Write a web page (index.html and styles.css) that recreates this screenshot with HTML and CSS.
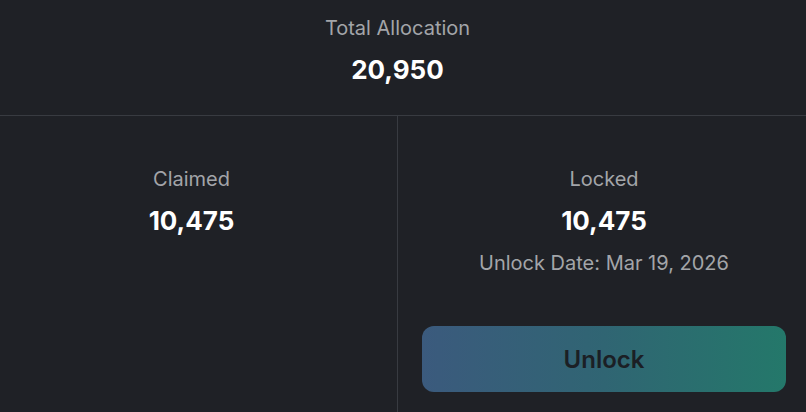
FILE: index.html
```html
<!DOCTYPE html>
<html lang="en">
<head>
<meta charset="utf-8">
<title>Allocation</title>
<link rel="stylesheet" href="styles.css">
</head>
<body>
<main class="panel">
  <section class="total">
    <div class="label">Total Allocation</div>
    <div class="value">20,950</div>
  </section>
  <section class="split">
    <div class="cell cell-claimed">
      <div class="label">Claimed</div>
      <div class="value">10,475</div>
    </div>
    <div class="cell cell-locked">
      <div class="label">Locked</div>
      <div class="value">10,475</div>
      <div class="date">Unlock Date: Mar 19, 2026</div>
      <button class="unlock" type="button">Unlock</button>
    </div>
  </section>
</main>
</body>
</html>
```
FILE: styles.css
```css
html, body {
  margin: 0;
  padding: 0;
  background: #1f2126;
}
body {
  font-family: Inter, "Noto Sans", sans-serif;
  color: #ffffff;
  width: 806px;
  height: 412px;
  overflow: hidden;
}
.panel {
  display: flex;
  flex-direction: column;
  height: 412px;
}
.total {
  display: flex;
  flex-direction: column;
  align-items: center;
  padding: 14px 11px 0 0;
  height: 101px;
  border-bottom: 1px solid #383b41;
}
.label {
  font-size: 20px;
  line-height: 28px;
  color: #a3a5a9;
}
.value {
  font-size: 26px;
  line-height: 30px;
  font-weight: 700;
  color: #ffffff;
  margin-top: 13px;
}
.split {
  display: grid;
  grid-template-columns: 398px 1fr;
  flex: 1;
}
.cell {
  display: flex;
  flex-direction: column;
  align-items: center;
  padding-top: 49px;
}
.cell-claimed {
  border-right: 1px solid #383b41;
  padding-right: 14px;
}
.cell-locked {
  padding-left: 24px;
  padding-right: 20px;
}
.date {
  margin-top: 13px;
  font-size: 20px;
  line-height: 28px;
  color: #a3a5a9;
}
.unlock {
  margin-top: 49px;
  width: 100%;
  height: 66px;
  border: none;
  border-radius: 12px;
  background: linear-gradient(90deg, #3b5a7d 0%, #306573 50%, #24786a 100%);
  color: #1b1f25;
  font-family: Inter, "Noto Sans", sans-serif;
  font-size: 24px;
  font-weight: 600;
}
```
